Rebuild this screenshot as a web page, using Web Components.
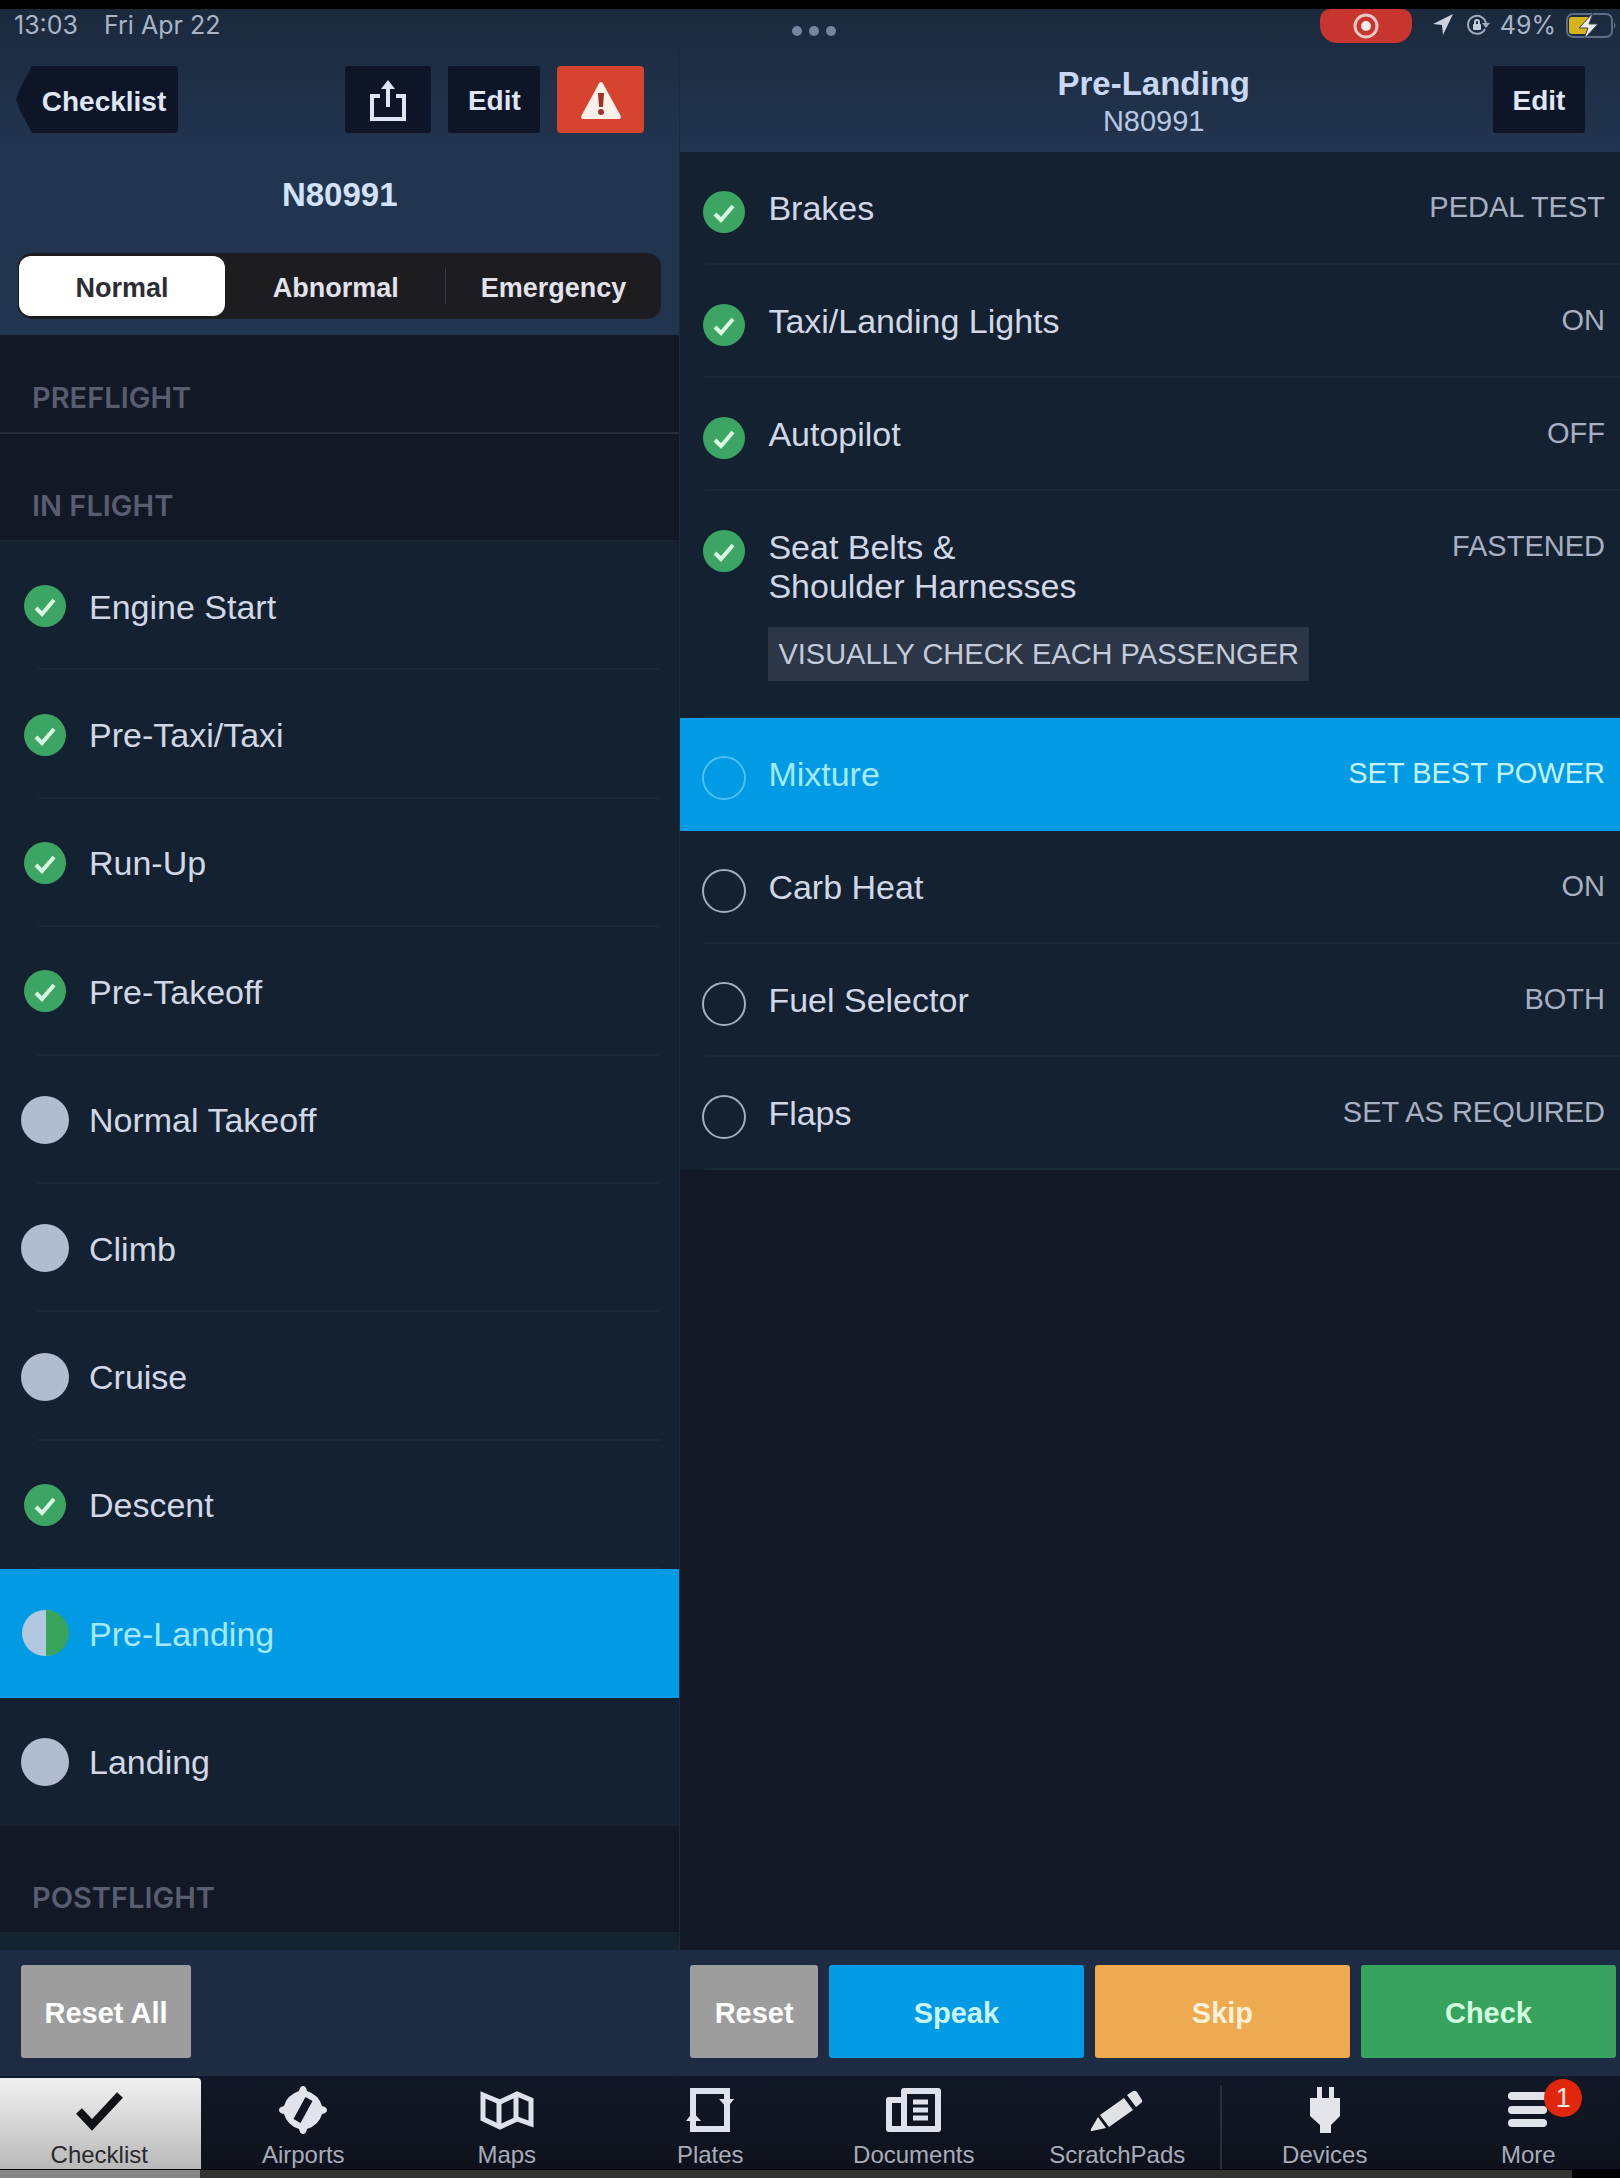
<!DOCTYPE html>
<html lang="en">
<head>
<meta charset="utf-8">
<meta name="viewport" content="width=device-width, initial-scale=1">
<title>Checklist</title>
<style>
  html, body { margin: 0; background: #000; }
  body { font-family: "Liberation Sans", Arial, sans-serif; color: #d0d7e6; overflow-x: hidden; }
</style>
</head>
<body>
<checklist-app></checklist-app>

<script>
const define = (name, html, setup) => {
  const template = document.createElement('template');
  template.innerHTML = '<style>:host,*{box-sizing:border-box}</style>' + html;
  customElements.define(name, class extends HTMLElement {
    connectedCallback() {
      if (this.shadowRoot) return;
      const root = this.attachShadow({ mode: 'open' });
      root.append(template.content.cloneNode(true));
      if (setup) setup(this, root);
    }
  });
};

/* Status bar */
define('status-bar', `
<style>
  :host { display: grid; grid-template-columns: 1fr auto 1fr; height: 41px; font: 400 25px/32px Inter, sans-serif; color: #a9b4c6; }
  .left { display: flex; gap: 26px; padding-left: 14px; }
  .dots { display: flex; gap: 7px; padding: 17px 0 0 8px; }
  .dots i { width: 10px; height: 10px; border-radius: 50%; background: #76859e; }
  .right { display: flex; justify-content: flex-end; gap: 10px; padding-right: 3px; }
  .rec { width: 92px; height: 34px; border-radius: 10px 10px 17px 17px; background: #c8342e; display: flex; justify-content: center; margin-right: 10px; }
  svg { display: block; flex: none; }
</style>
<div class="left"><span>13:03</span><span>Fri Apr 22</span></div>
<div class="dots"><i></i><i></i><i></i></div>
<div class="right">
  <div class="rec"><svg width="34" height="34" viewBox="0 0 34 34"><circle cx="17" cy="17" r="11" fill="none" stroke="#e9c9c4" stroke-width="3"/><circle cx="17" cy="17" r="5" fill="#f6ece6"/></svg></div>
  <svg width="22" height="32" viewBox="0 0 22 32"><path d="M21 5 1 15l9 1 1 10z" fill="#ccd3de"/></svg>
  <svg width="26" height="32" viewBox="0 0 26 32"><path d="M21 20a9 9 0 1 1 1-5" fill="none" stroke="#9eabbd" stroke-width="2"/><path d="m18 14 4 5 4-5z" fill="#9eabbd"/><rect x="9" y="15" width="8" height="6" rx="1" fill="#c5ceda"/><path d="M11 15v-2a2 2 0 0 1 4 0v2" fill="none" stroke="#c5ceda" stroke-width="2"/></svg>
  <span>49%</span>
  <svg width="51" height="32" viewBox="0 0 51 32"><rect x="1" y="5" width="45" height="23" rx="6" fill="none" stroke="#5d6d83" stroke-width="2"/><path d="M48 13q3 3 0 7z" fill="#5d6d83"/><path d="M6 8h16v17H6q-3 0-3-3V11q0-3 3-3z" fill="#d3b41c"/><path d="M27 4 13 19h9l-4 11 14-15h-9z" fill="#eef0f0" stroke="#3b4450" stroke-width="1"/></svg>
</div>`);

/* Dark toolbar button; "back" draws the arrow-shaped variant, "alert" the red one */
define('bar-button', `
<style>
  :host { display: block; }
  button { display: flex; align-items: center; justify-content: center; width: 92px; height: 67px; border: 0; border-radius: 2px; padding: 3px 0 0; background: #0e1526; color: #dfe5f3; font: 700 28px/32px "Liberation Sans", sans-serif; }
  :host([kind=icon]) button { width: 86px; }
  :host([kind=alert]) button { width: 87px; background: #d6432f; border-radius: 4px; }
  :host([kind=back]) button { width: 162px; padding: 5px 0 0 14px; border-radius: 0 4px 4px 0; clip-path: polygon(0 50%, 4px 34%, 16px 0, 100% 0, 100% 100%, 16px 100%, 4px 66%); }
</style>
<button type="button"><slot></slot></button>`, (el, root) => {
  if (el.title) root.querySelector('button').setAttribute('aria-label', el.title);
});

/* Segmented control */
define('segment-control', `
<style>
  :host { display: block; }
  fieldset { margin: 0; border: 0; padding: 3px 1px; display: grid; grid-template-columns: 206px 1fr 1fr; gap: 4px; height: 66px; border-radius: 14px; background: #1c1c21; font: 700 27px/32px "Liberation Sans", sans-serif; color: #e2e2ea; }
  label { position: relative; display: flex; align-items: center; justify-content: center; padding-top: 3px; border-radius: 12px; }
  label:last-child::before { content: ""; position: absolute; left: -2px; top: 12px; bottom: 12px; width: 1px; background: #3a3a42; }
  input { appearance: none; position: absolute; inset: 0; margin: 0; }
  label:has(:checked) { background: #fff; color: #2d2d33; }
</style>
<fieldset aria-label="Checklist type">
  <label><input type="radio" name="kind" checked>Normal</label>
  <label><input type="radio" name="kind">Abnormal</label>
  <label><input type="radio" name="kind">Emergency</label>
</fieldset>`);

/* Progress mark: done, half, empty or open */
define('state-mark', `
<style>
  :host { display: block; flex: none; width: 48px; height: 48px; }
  svg { display: block; }
</style>
<svg width="48" height="48" viewBox="0 0 48 48"></svg>`, (el, root) => {
  root.querySelector('svg').innerHTML = {
    done: '<circle cx="24" cy="24" r="21" fill="#3da564"/><path d="m15 26 6 6 12-14" fill="none" stroke="#d9ffe2" stroke-width="4"/>',
    half: '<circle cx="24" cy="24" r="23" fill="#b1c8df"/><path d="M25 1a23 23 0 0 1 0 46z" fill="#38a45c"/>',
    empty: '<circle cx="24" cy="24" r="24" fill="#b2bccf"/>',
    open: '<circle cx="24" cy="24" r="21" fill="none" stroke="#a3afbd" stroke-width="2"/>',
    current: '<circle cx="24" cy="24" r="21" fill="none" stroke="#4fc0f5" stroke-width="2"/>'
  }[el.getAttribute('state')];
});

/* Row of the left-hand list */
define('list-row', `
<style>
  :host { display: block; min-height: 120px; background: #142130; }
  a { display: flex; align-items: center; gap: 20px; height: 100%; padding: 0 20px 0 21px; color: #d0d7e6; text-decoration: none; font-size: 34px; line-height: 39px; position: relative; }
  a::after { content: ""; position: absolute; left: 38px; right: 20px; bottom: 0; height: 2px; background: #182938; }
  :host([last]) a::after { left: 0; right: 0; background: #1a2233; }
  :host([active]) { background: #009be4; }
  :host([active]) a { color: #a5e9ff; }
  :host([active]) a::after { display: none; }
  span { padding-top: 2px; }
</style>
<a href="#"><state-mark></state-mark><span><slot></slot></span></a>`, (el, root) => {
  const mark = document.createElement('state-mark');
  mark.setAttribute('state', el.getAttribute('state'));
  root.querySelector('state-mark').replaceWith(mark);
});

/* Section heading of the left-hand list */
define('list-heading', `
<style>
  :host { display: flex; align-items: flex-end; height: 108px; padding: 0 32px 18px; border-bottom: 2px solid #1b2231; }
  :host([first]) { height: 99px; border-color: #272c3a; }
  h2 { margin: 0; font: 600 29px/32px Inter, "Liberation Sans", sans-serif; color: #585d6f; }
</style>
<h2><slot></slot></h2>`);

/* One step of the open checklist */
define('check-step', `
<style>
  :host { display: block; background: #142130; position: relative; }
  :host::after { content: ""; position: absolute; left: 25px; right: 0; bottom: 0; height: 2px; background: #182938; }
  label { display: flex; align-items: flex-start; padding: 37px 15px 31px 20px; }
  .tick { display: grid; grid-template-rows: 45px; align-items: center; width: 48px; height: 45px; margin-right: 20px; }
  .tick > * { grid-area: 1 / 1; margin: 0; }
  input { appearance: none; width: 48px; height: 45px; }
  .body { flex: 1; padding-bottom: 6px; font-size: 34px; line-height: 39px; }
  .value { font-size: 29px; line-height: 37px; color: #a7b0c2; }
  .note { display: block; width: fit-content; margin-top: 21px; padding: 8px 10px 7px; background: #2d3646; font-size: 29px; line-height: 39px; color: #c3cada; }
  .note[hidden] { display: none; }
  :host([state=current]) { background: #009be4; color: #a5e9ff; }
  :host([state=current]) .value { color: #c4f3ff; }
  :host([state=current])::after { display: none; }
</style>
<label>
  <span class="tick"><input type="checkbox"></span>
  <span class="body"><slot></slot><span class="note" hidden></span></span>
  <span class="value"></span>
</label>`, (el, root) => {
  const state = el.getAttribute('state');
  const mark = document.createElement('state-mark');
  mark.setAttribute('state', state);
  root.querySelector('.tick').append(mark);
  root.querySelector('input').checked = state === 'done';
  root.querySelector('.value').textContent = el.getAttribute('value');
  if (el.hasAttribute('note')) {
    const note = root.querySelector('.note');
    note.hidden = false;
    note.textContent = el.getAttribute('note');
  }
});

/* Large coloured button of the footer */
define('action-button', `
<style>
  :host { display: block; }
  button { width: 100%; height: 93px; border: 0; border-radius: 3px; padding: 2px 0 0; background: var(--fill, #9d9d9d); color: var(--ink, #fff); font: 700 29px/32px "Liberation Sans", sans-serif; }
</style>
<button type="button"><slot></slot></button>`);

/* Item of the bottom tab bar */
define('tab-item', `
<style>
  :host { display: block; }
  a { position: relative; display: flex; flex-direction: column; align-items: center; height: 91px; padding-top: 8px; color: #a8acb9; text-decoration: none; font-size: 24px; line-height: 28px; }
  :host([active]) a { margin-right: 1px; background: linear-gradient(#f1f1f1, #b9b9b9); color: #2a2a2e; border-radius: 0 4px 0 0; }
  ::slotted(svg) { display: block; }
  .label { padding-top: 7px; }
  .badge { position: absolute; left: 50%; top: 1px; margin-left: 16px; width: 38px; height: 38px; border-radius: 50%; background: #e0270b; color: #ffe9e4; font-size: 27px; line-height: 38px; text-align: center; }
  .badge[hidden] { display: none; }
</style>
<a href="#"><slot name="icon"></slot><span class="label"><slot></slot></span><span class="badge" hidden></span></a>`, (el, root) => {
  if (el.hasAttribute('badge')) {
    const badge = root.querySelector('.badge');
    badge.hidden = false;
    badge.textContent = el.getAttribute('badge');
  }
});

define('tab-bar', `
<style>
  :host { display: block; overflow: hidden; background: linear-gradient(#111827, #0f121c); border-bottom: 1px solid #000; }
  nav { display: grid; grid-template-columns: repeat(6, 1fr) auto repeat(2, 1fr); width: calc(100% + 12px); margin-left: -2px; padding-top: 2px; }
  .rule { width: 2px; margin: 7px 1px 0; background: #2a2f3c; }
</style>
<nav>
  <tab-item active><svg slot="icon" width="56" height="48" viewBox="0 0 56 48"><path d="m8 25 13 14L49 9" fill="none" stroke="#111216" stroke-width="8"/></svg>Checklist</tab-item>
  <tab-item><svg slot="icon" width="56" height="48" viewBox="0 0 56 48"><path d="M28 0q3 0 4 5 12 4 15 15 5 1 5 4t-5 4q-3 11-15 15-1 5-4 5t-4-5Q12 39 9 28q-5-1-5-4t5-4Q12 9 24 5q1-5 4-5z" fill="#e1e4ee"/><path d="m22 35 12-22" stroke="#111624" stroke-width="8"/></svg>Airports</tab-item>
  <tab-item><svg slot="icon" width="56" height="48" viewBox="0 0 56 48"><g fill="none" stroke="#dfe2ec" stroke-width="5"><path d="m4 9 17 7 17-8 14 6v24l-14-5-17 8-17-8z"/><path d="M20 16v25M37 8v25"/></g></svg>Maps</tab-item>
  <tab-item><svg slot="icon" width="56" height="48" viewBox="0 0 56 48"><rect x="11" y="5" width="34" height="38" fill="none" stroke="#dfe2ec" stroke-width="6"/><path d="M37 13h15l-7 9zM19 35H4l7-9z" fill="#dfe2ec"/></svg>Plates</tab-item>
  <tab-item><svg slot="icon" width="56" height="48" viewBox="0 0 56 48"><g fill="none" stroke="#dfe2ec"><path d="M18 14H3v29h15M18 5h34v38H18z" stroke-width="6" stroke-linejoin="round"/><path d="M27 16h15M27 24h15M27 32h15" stroke-width="5"/></g></svg>Documents</tab-item>
  <tab-item><svg slot="icon" width="56" height="48" viewBox="0 0 56 48"><path d="M44 5q2-1 4 1l5 8q1 2-1 3l-5 4-9-12zM35 12l9 12-24 17-9-12zM9 31l8 11-14 3q-2 0-1-2z" fill="#e1e2e6"/></svg>ScratchPads</tab-item>
  <span class="rule"></span>
  <tab-item><svg slot="icon" width="56" height="48" viewBox="0 0 56 48"><path d="M20 1h5v11h7V1h5v11h6v18l-9 9v8H23v-8l-10-9V12h7z" fill="#e4e5ea"/></svg>Devices</tab-item>
  <tab-item badge="1"><svg slot="icon" width="56" height="48" viewBox="0 0 56 48"><path d="M12 10h31M12 24h31M12 37h31" stroke="#e1e3ea" stroke-width="8" stroke-linecap="round"/></svg>More</tab-item>
</nav>`);

/* Left pane */
define('checklist-pane', `
<style>
  :host { display: flex; flex-direction: column; border-right: 1px solid #1b2a3c; }
  .tools { display: flex; gap: 17px; padding: 16px 35px 0 16px; }
  .space { flex: 1; }
  h1 { margin: 0; height: 120px; padding-top: 4px; text-align: center; font: 700 33px/116px "Liberation Sans", sans-serif; color: #d3e2fb; }
  segment-control { margin: 0 18px 16px; }
  .list { flex: 1; display: flex; flex-direction: column; background: #121826; }
  .rows { flex: 1; display: grid; grid-auto-rows: 1fr; }
  .next { height: 16px; background: #142330; }
  .foot { height: 126px; padding: 15px 20px 0 21px; background: #1e2c43; }
  action-button { width: 170px; }
  svg { display: block; }
</style>
<div class="tools">
  <bar-button kind="back">Checklist</bar-button>
  <span class="space"></span>
  <bar-button kind="icon" title="Share"><svg width="38" height="42" viewBox="0 0 38 42"><path d="M11 16H3v23h32V16h-8M19 27V7" fill="none" stroke="#dfe5f3" stroke-width="4"/><path d="m19 0 7 9H12z" fill="#dfe5f3"/></svg></bar-button>
  <bar-button>Edit</bar-button>
  <bar-button kind="alert" title="Warnings"><svg width="42" height="40" viewBox="0 0 42 40"><path d="M21 3 39 36H3z" fill="#fbf1e8" stroke="#fbf1e8" stroke-width="4" stroke-linejoin="round"/><path d="M18 12h6l-1 14h-4z" fill="#9a3428"/><circle cx="21" cy="31" r="3" fill="#9a3428"/></svg></bar-button>
</div>
<h1>N80991</h1>
<segment-control></segment-control>
<div class="list">
  <list-heading first>PREFLIGHT</list-heading>
  <list-heading>IN FLIGHT</list-heading>
  <div class="rows">
    <list-row state="done">Engine Start</list-row>
    <list-row state="done">Pre-Taxi/Taxi</list-row>
    <list-row state="done">Run-Up</list-row>
    <list-row state="done">Pre-Takeoff</list-row>
    <list-row state="empty">Normal Takeoff</list-row>
    <list-row state="empty">Climb</list-row>
    <list-row state="empty">Cruise</list-row>
    <list-row state="done">Descent</list-row>
    <list-row state="half" active>Pre-Landing</list-row>
    <list-row state="empty" last>Landing</list-row>
  </div>
  <list-heading>POSTFLIGHT</list-heading>
  <div class="next"></div>
</div>
<div class="foot"><action-button>Reset All</action-button></div>`);

/* Right pane */
define('steps-pane', `
<style>
  :host { display: flex; flex-direction: column; }
  header { display: grid; grid-template-columns: 1fr auto 1fr; height: 102px; padding: 0 35px 0 42px; }
  .title { grid-column: 2; padding-top: 15px; text-align: center; }
  h2 { margin: 0; font: 700 33px/38px "Liberation Sans", sans-serif; color: #c9d8f2; }
  p { margin: 0; font-size: 29px; line-height: 36px; color: #b9c8e2; }
  header bar-button { justify-self: end; padding-top: 16px; }
  .steps { flex: 1; background: #121826; }
  .foot { display: grid; grid-template-columns: 1fr 2fr 2fr 2fr; gap: 11px; height: 126px; padding: 15px 4px 0 10px; background: #1e2c43; }
</style>
<header>
  <div class="title"><h2>Pre-Landing</h2><p>N80991</p></div>
  <bar-button>Edit</bar-button>
</header>
<div class="steps">
  <check-step state="done" value="PEDAL TEST">Brakes</check-step>
  <check-step state="done" value="ON">Taxi/Landing Lights</check-step>
  <check-step state="done" value="OFF">Autopilot</check-step>
  <check-step state="done" value="FASTENED" note="VISUALLY CHECK EACH PASSENGER">Seat Belts &amp;<br>Shoulder Harnesses</check-step>
  <check-step state="current" value="SET BEST POWER">Mixture</check-step>
  <check-step state="open" value="ON">Carb Heat</check-step>
  <check-step state="open" value="BOTH">Fuel Selector</check-step>
  <check-step state="open" value="SET AS REQUIRED">Flaps</check-step>
</div>
<div class="foot">
  <action-button>Reset</action-button>
  <action-button style="--fill:#009be4;--ink:#c9f5ff">Speak</action-button>
  <action-button style="--fill:#eeaa4e;--ink:#fff0da">Skip</action-button>
  <action-button style="--fill:#38a35e;--ink:#d2ffdf">Check</action-button>
</div>`);

define('checklist-app', `
<style>
  :host { display: flex; flex-direction: column; min-height: 100vh; padding-top: 9px; background: #000; }
  .screen { flex: 1; display: flex; flex-direction: column; background: linear-gradient(#1b293d, #22354f 144px); }
  main { flex: 1; display: grid; grid-template-columns: 42% 1fr; }
  .track { display: flex; height: 8px; }
  .played { width: 200px; background: #858585; }
  .loaded { flex: 1; margin-right: 48px; background: #333; }
</style>
<div class="screen">
  <status-bar></status-bar>
  <main><checklist-pane></checklist-pane><steps-pane></steps-pane></main>
  <tab-bar></tab-bar>
</div>
<div class="track"><span class="played"></span><span class="loaded"></span></div>`);
</script>
</body>
</html>
